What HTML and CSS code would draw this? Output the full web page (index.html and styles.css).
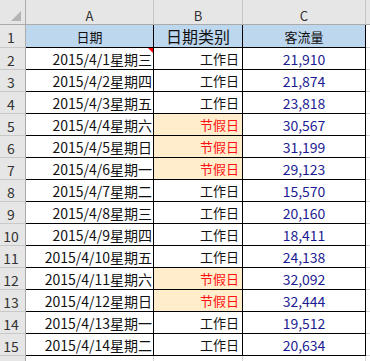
FILE: index.html
```html
<!DOCTYPE html>
<html>
<head>
<meta charset="utf-8">
<link rel="stylesheet" href="styles.css">
</head>
<body>
<div class="sheet">
  <div class="corner"><span class="corner-tri"></span></div>
  <div class="colhead">A</div>
  <div class="colhead">B</div>
  <div class="colhead">C</div>
  <div class="colhead rest"></div>

  <div class="rowhead">1</div>
  <div class="cell title">日期</div>
  <div class="cell title big">日期类别</div>
  <div class="cell title">客流量</div>
  <div class="blank"></div>

  <div class="rowhead">2</div>
  <div class="cell date">2015/4/1星期三<span class="comment"></span></div>
  <div class="cell kind">工作日</div>
  <div class="cell num">21,910</div>
  <div class="blank"></div>

  <div class="rowhead">3</div>
  <div class="cell date">2015/4/2星期四</div>
  <div class="cell kind">工作日</div>
  <div class="cell num">21,874</div>
  <div class="blank"></div>

  <div class="rowhead">4</div>
  <div class="cell date">2015/4/3星期五</div>
  <div class="cell kind">工作日</div>
  <div class="cell num">23,818</div>
  <div class="blank"></div>

  <div class="rowhead">5</div>
  <div class="cell date">2015/4/4星期六</div>
  <div class="cell kind holiday">节假日</div>
  <div class="cell num">30,567</div>
  <div class="blank"></div>

  <div class="rowhead">6</div>
  <div class="cell date">2015/4/5星期日</div>
  <div class="cell kind holiday">节假日</div>
  <div class="cell num">31,199</div>
  <div class="blank"></div>

  <div class="rowhead">7</div>
  <div class="cell date">2015/4/6星期一</div>
  <div class="cell kind holiday">节假日</div>
  <div class="cell num">29,123</div>
  <div class="blank"></div>

  <div class="rowhead">8</div>
  <div class="cell date">2015/4/7星期二</div>
  <div class="cell kind">工作日</div>
  <div class="cell num">15,570</div>
  <div class="blank"></div>

  <div class="rowhead">9</div>
  <div class="cell date">2015/4/8星期三</div>
  <div class="cell kind">工作日</div>
  <div class="cell num">20,160</div>
  <div class="blank"></div>

  <div class="rowhead">10</div>
  <div class="cell date">2015/4/9星期四</div>
  <div class="cell kind">工作日</div>
  <div class="cell num">18,411</div>
  <div class="blank"></div>

  <div class="rowhead">11</div>
  <div class="cell date">2015/4/10星期五</div>
  <div class="cell kind">工作日</div>
  <div class="cell num">24,138</div>
  <div class="blank"></div>

  <div class="rowhead">12</div>
  <div class="cell date">2015/4/11星期六</div>
  <div class="cell kind holiday">节假日</div>
  <div class="cell num">32,092</div>
  <div class="blank"></div>

  <div class="rowhead">13</div>
  <div class="cell date">2015/4/12星期日</div>
  <div class="cell kind holiday">节假日</div>
  <div class="cell num">32,444</div>
  <div class="blank"></div>

  <div class="rowhead">14</div>
  <div class="cell date">2015/4/13星期一</div>
  <div class="cell kind">工作日</div>
  <div class="cell num">19,512</div>
  <div class="blank"></div>

  <div class="rowhead">15</div>
  <div class="cell date">2015/4/14星期二</div>
  <div class="cell kind">工作日</div>
  <div class="cell num">20,634</div>
  <div class="blank"></div>

  <div class="rowhead"></div>
  <div class="empty"></div>
  <div class="empty"></div>
  <div class="empty"></div>
  <div class="blank"></div>
</div>
</body>
</html>
```

FILE: styles.css
```css
html, body {
  margin: 0;
  padding: 0;
  background: #ffffff;
  overflow: hidden;
}

body {
  width: 370px;
  height: 361px;
  font-family: "Noto Sans CJK SC", "Noto Sans", sans-serif;
}

.sheet {
  display: grid;
  grid-template-columns: 26px 128px 89px 123px 1fr;
  grid-template-rows: 25px 23px repeat(15, 22px);
  width: 370px;
}

.sheet > div {
  box-sizing: border-box;
  overflow: hidden;
  white-space: nowrap;
}

.corner {
  background: #e6e6e6;
  border-right: 1px solid #ababab;
  border-bottom: 1px solid #ababab;
  position: relative;
}

.corner-tri {
  position: absolute;
  right: 4px;
  bottom: 3px;
  width: 0;
  height: 0;
  border-left: 10px solid transparent;
  border-bottom: 10px solid #b4b4b4;
}

.colhead {
  background: #e6e6e6;
  border-right: 1px solid #c6c6c6;
  border-bottom: 1px solid #ababab;
  color: #333333;
  font-size: 13px;
  display: flex;
  align-items: flex-end;
  justify-content: center;
  padding-bottom: 1px;
  line-height: 15px;
}

.colhead.rest {
  border-right: none;
}

.rowhead {
  background: #e6e6e6;
  border-right: 1px solid #ababab;
  border-bottom: 1px solid #c8c8c8;
  color: #333333;
  font-size: 14px;
  display: flex;
  align-items: center;
  justify-content: center;
  padding-right: 3px;
  padding-top: 2px;
}

.cell {
  border-right: 1px solid #000000;
  border-bottom: 1px solid #000000;
  display: flex;
  align-items: center;
  font-size: 14px;
  color: #111111;
  position: relative;
}

.title {
  background: #bdd7ee;
  justify-content: center;
  font-size: 13px;
  color: #111111;
}

.title.big {
  font-size: 16px;
}

.date {
  justify-content: flex-end;
  padding-right: 1px;
}

.kind {
  justify-content: flex-end;
  padding-right: 3px;
  font-size: 13px;
}

.holiday {
  background: #ffedcc;
  color: #ff1111;
}

.num {
  justify-content: center;
  color: #1c1c92;
}

.comment {
  position: absolute;
  top: 0;
  right: 0;
  width: 0;
  height: 0;
  border-left: 5px solid transparent;
  border-top: 5px solid #ff0000;
}

.blank {
  border-bottom: 1px solid #d4d4d4;
}

.empty {
  border-right: 1px solid #d4d4d4;
  border-bottom: 1px solid #d4d4d4;
}
```
